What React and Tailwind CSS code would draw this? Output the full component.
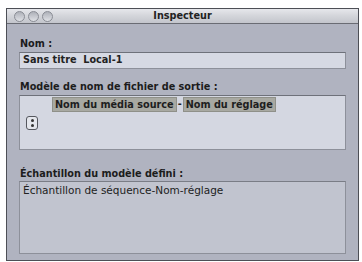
import React from 'react';

const font = { fontFamily: '"DejaVu Sans", "Liberation Sans", sans-serif' };

const Light = () => (
  <span className="w-[11px] h-[11px] rounded-full border border-[#8a8d95] bg-gradient-to-b from-[#aeb1b9] to-[#dfe1e6] inline-block" />
);

const App = () => {
  return (
    <div className="w-[362px] h-[262px] bg-white pt-[8px] pl-[6px]" style={font}>
      <div className="w-[353px] h-[253px] border border-[#4d4f56] flex flex-col bg-[#b0b3c0]">
        <div className="relative h-[15px] flex items-center px-[7px] gap-[3px] bg-gradient-to-b from-[#e6e7eb] via-[#d3d5da] to-[#c3c5cc] border-b border-[#6a6c74]">
          <Light />
          <Light />
          <Light />
          <div className="absolute inset-0 flex items-center justify-center text-[9.7px] font-bold text-[#222]">
            Inspecteur
          </div>
        </div>

        <div className="flex-1 flex flex-col px-[12px] pt-[13px]">
          <label className="text-[9.7px] font-bold text-[#1c1c1c] ml-[1px] leading-[13px]">Nom :</label>
          <div className="mt-[2px] h-[17px] bg-[#d6d9e3] border border-[#8d909a] border-t-[#6e717a] flex items-center px-[3px] text-[9.7px] font-bold text-[#222]">
            Sans titre&nbsp;&nbsp;Local-1
          </div>

          <label className="mt-[11px] text-[9.7px] font-bold text-[#1c1c1c] ml-[1px] leading-[13px]">
            Modèle de nom de fichier de sortie :
          </label>
          <div className="mt-[2px] h-[55px] bg-[#d4d7e1] border border-[#8d909a] border-t-[#6e717a] relative">
            <div className="flex items-center ml-[32px] mt-[1px] text-[9.7px] font-bold text-[#1e1e1e]">
              <span className="bg-[#a8a9a2] border border-[#8f9089] px-[2px] leading-[13px]">Nom du média source</span>
              <span className="px-[1px]">-</span>
              <span className="bg-[#a8a9a2] border border-[#8f9089] px-[2px] leading-[13px]">Nom du réglage</span>
            </div>
            <div className="absolute left-[6px] top-[20px] w-[12px] h-[14px] rounded-[3px] border border-[#55575e] bg-[#e4e6ec] flex flex-col items-center justify-center gap-[2px]">
              <span className="w-[3px] h-[3px] rounded-full bg-[#333]" />
              <span className="w-[3px] h-[3px] rounded-full bg-[#333]" />
            </div>
          </div>

          <label className="mt-[17px] text-[9.7px] font-bold text-[#1c1c1c] ml-[1px] leading-[13px]">
            Échantillon du modèle défini :
          </label>
          <div className="mt-[1px] h-[73px] bg-[#c1c4cf] border border-[#8d909a] border-t-[#7a7d86] px-[3px] pt-[1px] text-[10.5px] text-[#222]">
            Échantillon de séquence-Nom-réglage
          </div>
        </div>
      </div>
    </div>
  );
};

export default App;
